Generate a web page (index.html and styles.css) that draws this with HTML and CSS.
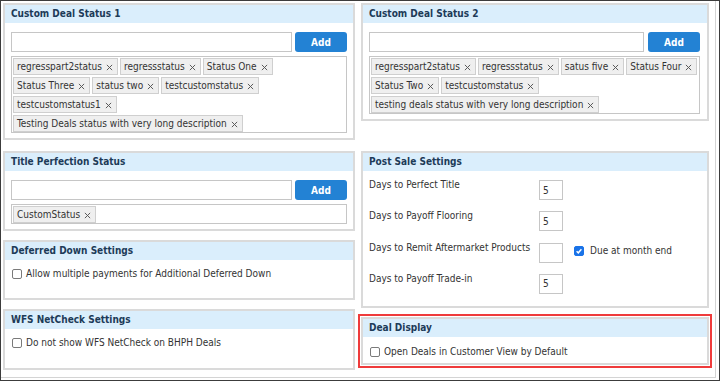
FILE: index.html
```html
<!DOCTYPE html>
<html>
<head>
<meta charset="utf-8">
<link rel="stylesheet" href="styles.css">
</head>
<body>
<div class="frame">
  <div class="container">
    <div class="grid">
      <section class="panel">
        <h2 class="panel-head">Custom Deal Status 1</h2>
        <div class="panel-body">
          <div class="add-row">
            <input class="text-input" type="text">
            <button class="add-btn">Add</button>
          </div>
          <div class="tag-box">
            <span class="tag">regresspart2status<svg class="x" viewBox="0 0 8 8"><path d="M1 1L7 7M7 1L1 7"/></svg></span>
            <span class="tag">regressstatus<svg class="x" viewBox="0 0 8 8"><path d="M1 1L7 7M7 1L1 7"/></svg></span>
            <span class="tag">Status One<svg class="x" viewBox="0 0 8 8"><path d="M1 1L7 7M7 1L1 7"/></svg></span>
            <span class="tag">Status Three<svg class="x" viewBox="0 0 8 8"><path d="M1 1L7 7M7 1L1 7"/></svg></span>
            <span class="tag">status two<svg class="x" viewBox="0 0 8 8"><path d="M1 1L7 7M7 1L1 7"/></svg></span>
            <span class="tag">testcustomstatus<svg class="x" viewBox="0 0 8 8"><path d="M1 1L7 7M7 1L1 7"/></svg></span>
            <span class="tag">testcustomstatus1<svg class="x" viewBox="0 0 8 8"><path d="M1 1L7 7M7 1L1 7"/></svg></span>
            <span class="tag">Testing Deals status with very long description<svg class="x" viewBox="0 0 8 8"><path d="M1 1L7 7M7 1L1 7"/></svg></span>
          </div>
        </div>
      </section>

      <section class="panel panel-right top-right">
        <h2 class="panel-head">Custom Deal Status 2</h2>
        <div class="panel-body">
          <div class="add-row">
            <input class="text-input" type="text">
            <button class="add-btn">Add</button>
          </div>
          <div class="tag-box">
            <span class="tag">regresspart2status<svg class="x" viewBox="0 0 8 8"><path d="M1 1L7 7M7 1L1 7"/></svg></span>
            <span class="tag">regressstatus<svg class="x" viewBox="0 0 8 8"><path d="M1 1L7 7M7 1L1 7"/></svg></span>
            <span class="tag">satus five<svg class="x" viewBox="0 0 8 8"><path d="M1 1L7 7M7 1L1 7"/></svg></span>
            <span class="tag">Status Four<svg class="x" viewBox="0 0 8 8"><path d="M1 1L7 7M7 1L1 7"/></svg></span>
            <span class="tag">Status Two<svg class="x" viewBox="0 0 8 8"><path d="M1 1L7 7M7 1L1 7"/></svg></span>
            <span class="tag">testcustomstatus<svg class="x" viewBox="0 0 8 8"><path d="M1 1L7 7M7 1L1 7"/></svg></span>
            <span class="tag">testing deals status with very long description<svg class="x" viewBox="0 0 8 8"><path d="M1 1L7 7M7 1L1 7"/></svg></span>
          </div>
        </div>
      </section>

      <div class="stack">
        <section class="panel">
          <h2 class="panel-head">Title Perfection Status</h2>
          <div class="panel-body">
            <div class="add-row">
              <input class="text-input" type="text">
              <button class="add-btn">Add</button>
            </div>
            <div class="tag-box">
              <span class="tag">CustomStatus<svg class="x" viewBox="0 0 8 8"><path d="M1 1L7 7M7 1L1 7"/></svg></span>
            </div>
          </div>
        </section>

        <section class="panel">
          <h2 class="panel-head">Deferred Down Settings</h2>
          <div class="panel-body check-body">
            <label class="check-row"><span class="cb"></span>Allow multiple payments for Additional Deferred Down</label>
          </div>
        </section>

        <section class="panel">
          <h2 class="panel-head">WFS NetCheck Settings</h2>
          <div class="panel-body check-body tall">
            <label class="check-row"><span class="cb"></span>Do not show WFS NetCheck on BHPH Deals</label>
          </div>
        </section>
      </div>

      <div class="stack">
        <section class="panel panel-right">
          <h2 class="panel-head">Post Sale Settings</h2>
          <div class="panel-body ps-body">
            <div class="ps-row">
              <span class="ps-label">Days to Perfect Title</span>
              <input class="num-input" type="text" value="5">
            </div>
            <div class="ps-row">
              <span class="ps-label">Days to Payoff Flooring</span>
              <input class="num-input" type="text" value="5">
            </div>
            <div class="ps-row">
              <span class="ps-label">Days to Remit Aftermarket Products</span>
              <input class="num-input" type="text" value="">
              <label class="check-row due"><span class="cb checked"><svg viewBox="0 0 10 10"><path d="M2 5.2L4.1 7.3L8 2.8"/></svg></span>Due at month end</label>
            </div>
            <div class="ps-row">
              <span class="ps-label">Days to Payoff Trade-in</span>
              <input class="num-input" type="text" value="5">
            </div>
          </div>
        </section>

        <div class="highlight">
          <section class="panel panel-right">
            <h2 class="panel-head">Deal Display</h2>
            <div class="panel-body dd-body">
              <label class="check-row"><span class="cb"></span>Open Deals in Customer View by Default</label>
            </div>
          </section>
        </div>
      </div>
    </div>
  </div>
</div>
</body>
</html>
```

FILE: styles.css
```css
* { box-sizing: border-box; }

html, body {
  margin: 0;
  padding: 0;
  background: #ffffff;
}

body {
  font-family: "DejaVu Sans Condensed", "DejaVu Sans", sans-serif;
  font-stretch: condensed;
  font-size: 10px;
  color: #333333;
}

.frame {
  width: 720px;
  height: 381px;
  border: 1px solid #3c3c3c;
  overflow: hidden;
}

.container {
  width: 715px;
  height: 377px;
  border-right: 1px solid #d4d4d4;
  border-bottom: 1px solid #d4d4d4;
  padding: 2px 0 0 2px;
}

.grid {
  display: grid;
  grid-template-columns: 352px 348px;
  column-gap: 6px;
  row-gap: 11px;
  align-items: start;
}

.stack {
  display: flex;
  flex-direction: column;
  gap: 9px;
}

.panel {
  border: 2px solid #dadada;
  background: #ffffff;
}

.panel-head {
  margin: 0;
  height: 18px;
  line-height: 18px;
  padding-left: 6px;
  background: #daeefc;
  color: #1d3b58;
  font-size: 10px;
  font-weight: bold;
}

.panel-body {
  padding: 9px 6px 5px 6px;
}

.panel-right .panel-body {
  padding-right: 7px;
}

.add-row {
  display: flex;
  gap: 3px;
  height: 20px;
}

.text-input {
  flex: 1;
  height: 20px;
  margin: 0;
  border: 1px solid #c6c6c6;
  background: #fff;
  padding: 0 3px;
  font: inherit;
}

.panel-right .add-row { gap: 4px; }

.add-btn {
  width: 52px;
  height: 20px;
  margin: 0;
  padding: 0;
  border: none;
  border-radius: 3px;
  background: #2382d4;
  color: #ffffff;
  font-family: inherit;
  font-stretch: condensed;
  font-size: 10px;
  font-weight: bold;
}

.tag-box {
  margin-top: 4px;
  border: 1px solid #c6c6c6;
  padding: 1px 1px 0 1px;
  display: flex;
  flex-wrap: wrap;
  gap: 2px 2px;
  min-height: 20px;
}

.tag {
  display: inline-flex;
  align-items: center;
  height: 17px;
  padding: 0 4px 0 3px;
  border: 1px solid #cfcfcf;
  background: #efefef;
  color: #333333;
  white-space: nowrap;
}

.x {
  width: 7px;
  height: 7px;
  margin-left: 4px;
  margin-top: 1px;
}

.x path {
  stroke: #555555;
  stroke-width: 1.1;
  fill: none;
}

.check-body {
  padding-top: 8px;
  min-height: 38px;
}

.check-body.tall { min-height: 39px; }

.check-row {
  display: flex;
  align-items: center;
  height: 12px;
  line-height: 12px;
  color: #333333;
}

.cb {
  display: inline-block;
  width: 10px;
  height: 10px;
  border: 1px solid #7a7a7a;
  border-radius: 2px;
  background: #fff;
  margin: 0 4px 0 1px;
  flex: none;
}

.cb.checked {
  background: #1a73e8;
  border-color: #1a73e8;
  position: relative;
}

.cb.checked svg {
  display: block;
  width: 8px;
  height: 8px;
}

.cb.checked path {
  stroke: #ffffff;
  stroke-width: 1.8;
  fill: none;
}

.ps-body {
  padding: 9px 6px 12px 6px;
  display: flex;
  flex-direction: column;
  gap: 11.33px;
}

.ps-row {
  display: flex;
  align-items: flex-start;
  height: 20px;
}

.ps-label {
  width: 170px;
  line-height: 12px;
  margin-top: -1px;
  flex: none;
}

.num-input {
  width: 24px;
  height: 20px;
  margin: 0;
  border: 1px solid #c6c6c6;
  padding: 0 0 0 3px;
  font: inherit;
  color: #333;
  background: #fff;
}

.due {
  margin-left: 10px;
  margin-top: 2px;
}

.due .cb { margin-right: 6px; }

.highlight {
  outline: 2px solid #ef3b3b;
  outline-offset: 1px;
}

.dd-body {
  padding-top: 9px;
  padding-bottom: 5px;
}
```
